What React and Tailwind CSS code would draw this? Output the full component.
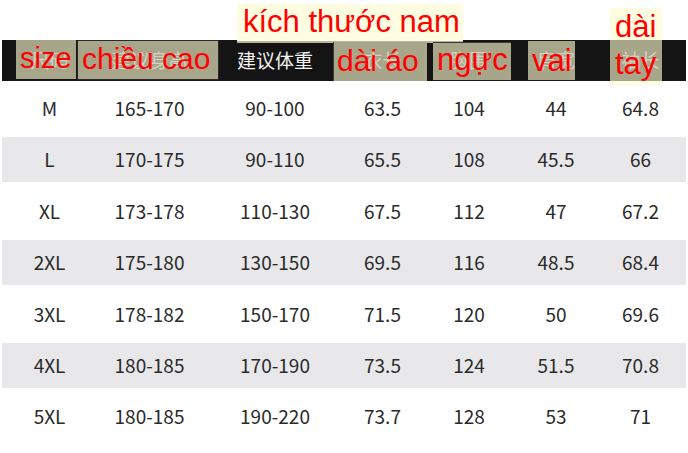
import React from 'react';

const cols = ['w-[95px]', 'w-[105px]', 'w-[146px]', 'w-[69px]', 'w-[104px]', 'w-[70px]', 'w-[99px]'];

const headers = [
  { label: '尺码', covered: true },
  { label: '建议身高', covered: true },
  { label: '建议体重', covered: false },
  { label: '衣长', covered: true },
  { label: '胸围', covered: true },
  { label: '肩宽', covered: true },
  { label: '袖长', covered: true },
];

const rows = [
  ['M', '165-170', '90-100', '63.5', '104', '44', '64.8'],
  ['L', '170-175', '90-110', '65.5', '108', '45.5', '66'],
  ['XL', '173-178', '110-130', '67.5', '112', '47', '67.2'],
  ['2XL', '175-180', '130-150', '69.5', '116', '48.5', '68.4'],
  ['3XL', '178-182', '150-170', '71.5', '120', '50', '69.6'],
  ['4XL', '180-185', '170-190', '73.5', '124', '51.5', '70.8'],
  ['5XL', '180-185', '190-220', '73.7', '128', '53', '71'],
];

const cjk = { fontFamily: '"Noto Sans CJK SC", "Noto Sans", sans-serif' };
const red = { fontFamily: '"Liberation Sans", Arial, sans-serif' };

export default function App() {
  return (
    <div className="relative w-[688px] h-[453px] bg-white overflow-hidden" style={cjk}>
      {/* size table */}
      <div className="pt-[40px] px-[2px]">
        <div className="flex h-[41px] bg-[#141414]">
          {headers.map((h, i) => (
            <div key={i} className={`${cols[i]} shrink-0 flex items-center justify-center relative z-20 text-[19px] ${h.covered ? 'text-[#d3d1c1]' : 'text-[#f2f2f2]'}`}>
              {h.label}
            </div>
          ))}
        </div>
        <div className="mt-[1.5px]">
          {rows.map((r, ri) => (
            <div key={ri} className="h-[51.4px] flex items-center">
              <div className={`flex w-full h-[45px] items-center ${ri % 2 === 1 ? 'bg-[#e8e8ea]' : ''}`}>
                {r.map((c, ci) => (
                  <div key={ci} className={`${cols[ci]} shrink-0 text-center text-[19px] text-[#2a2a2a]`}>
                    {c}
                  </div>
                ))}
              </div>
            </div>
          ))}
        </div>
      </div>

      {/* translation stickers pasted over the header */}
      <div className="absolute left-[237px] top-[4px] w-[226px] h-[37px] bg-[#fffde1] shadow-[0_2px_0_#b8b6a0] z-10" />
      <div className="absolute left-[610px] top-[8px] w-[52px] h-[77px] bg-[#fffde1] z-10" />

      <div className="absolute left-[16px] top-[40px] w-[60px] h-[39px] bg-[#a7a58a] z-10" />
      <div className="absolute left-[77px] top-[40px] w-[142px] h-[40px] bg-[#a7a58a] border border-[#2a2a2a] z-10" />
      <div className="absolute left-[333px] top-[42px] w-[94px] h-[39px] bg-[#a7a58a] border-l border-[#3a3a3a] z-10" />
      <div className="absolute left-[433px] top-[42px] w-[78px] h-[38px] bg-[#a7a58a] border-t border-[#3a3a3a] z-10" />
      <div className="absolute left-[528px] top-[41px] w-[47px] h-[39px] bg-[#a7a58a] z-10" />
      <div className="absolute left-[610px] top-[40px] w-[52px] h-[41px] bg-[#a7a58a] z-10" />

      <div className="absolute inset-0 z-30 text-[#ff0000] whitespace-nowrap" style={red}>
        <div className="absolute left-[243px] top-[6px] text-[31px] leading-[31px]">kích thước nam</div>
        <div className="absolute left-[20px] top-[44px] text-[29px] leading-[29px]">size</div>
        <div className="absolute left-[82px] top-[44px] text-[30px] leading-[30px]">chiều cao</div>
        <div className="absolute left-[337px] top-[46px] text-[30px] leading-[30px]">dài áo</div>
        <div className="absolute left-[437px] top-[44px] text-[31px] leading-[31px]">ngực</div>
        <div className="absolute left-[532px] top-[45px] text-[31px] leading-[31px]">vai</div>
        <div className="absolute left-[615px] top-[11px] text-[31px] leading-[31px]">dài</div>
        <div className="absolute left-[615px] top-[48px] text-[31px] leading-[31px]">tay</div>
      </div>
    </div>
  );
}
